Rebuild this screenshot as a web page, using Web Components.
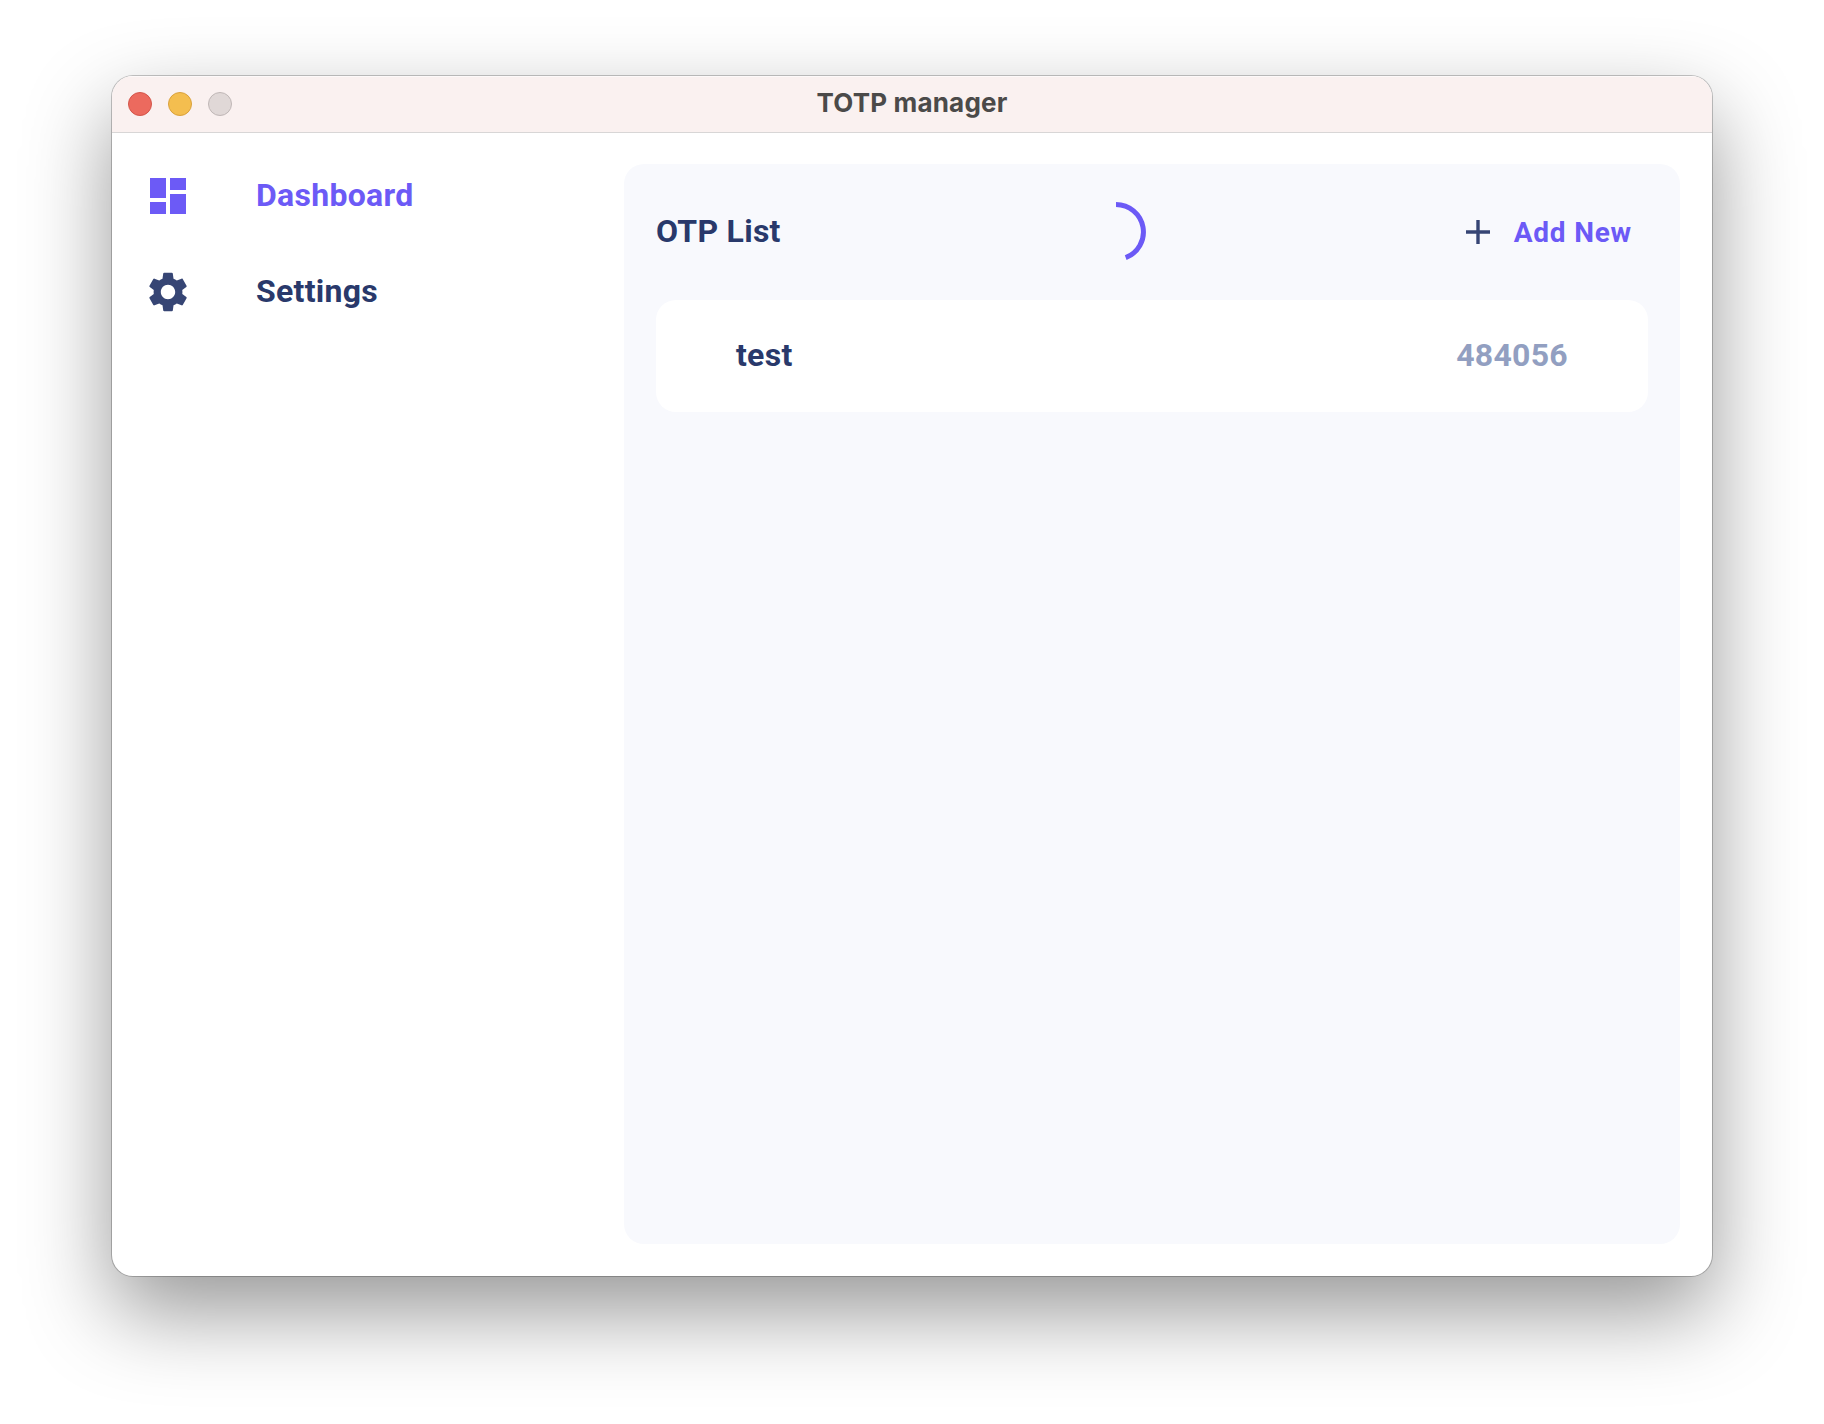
<!DOCTYPE html>
<html lang="en">
<head>
<meta charset="utf-8">
<title>TOTP manager</title>
<style>
html,body{margin:0;height:100%}
body{background:#fff;overflow:hidden;font-family:Roboto,sans-serif}
</style>
</head>
<body>
<app-window heading="TOTP manager">
  <nav-item slot="nav" icon="dashboard" active>Dashboard</nav-item>
  <nav-item slot="nav" icon="settings">Settings</nav-item>
  <otp-panel>
    <span slot="title">OTP List</span>
    <progress-ring slot="progress"></progress-ring>
    <add-button slot="action">Add New</add-button>
    <otp-card code="484056">test</otp-card>
  </otp-panel>
</app-window>
<script>
const define = (name, html, setup) => {
  const tpl = document.createElement('template');
  tpl.innerHTML = html;
  customElements.define(name, class extends HTMLElement {
    constructor() {
      super();
      this.attachShadow({mode: 'open'}).append(tpl.content.cloneNode(true));
    }
    connectedCallback() { if (setup) setup(this, this.shadowRoot); }
  });
};

define('app-window', `
<style>
:host{display:block;box-sizing:border-box;padding:76px 112px 148px;height:1424px;width:1824px}
.window{display:flex;flex-direction:column;height:1200px;border-radius:21px;overflow:hidden;background:#fff;
  box-shadow:0 0 0 1px rgba(0,0,0,.22),0 36px 86px rgba(0,0,0,.41)}
header{display:grid;grid-template-columns:1fr auto 1fr;align-items:center;box-sizing:border-box;height:57px;padding:0 16px;
  background:#faf1f0;border-bottom:1px solid #d8d6d6;box-shadow:inset 0 1px #fdf9f9}
.lights{display:flex;gap:16px}
.lights i{box-sizing:border-box;width:24px;height:24px;border-radius:50%;border:1px solid #d3554a;background:#ec6a5e}
.lights i:nth-child(2){background:#f4be4f;border-color:#d9a13c}
.lights i:nth-child(3){background:#e0d8d7;border-color:#bfb7b6}
h1{margin:0;font:700 26px/32px Inter,sans-serif;letter-spacing:.18px;color:#4b4a49;padding-bottom:2px}
main{flex:1;display:flex}
nav{width:512px;padding-top:15px;flex:none}
section{flex:1;display:flex;padding:31px 32px 32px 0}
::slotted(otp-panel){flex:1}
</style>
<div class="window">
  <header><div class="lights"><i></i><i></i><i></i></div><h1></h1></header>
  <main><nav><slot name="nav"></slot></nav><section><slot></slot></section></main>
</div>`, (el, root) => { root.querySelector('h1').textContent = el.getAttribute('heading'); });

const icons = {
  dashboard: 'M3 13h8V3H3v10zm0 8h8v-6H3v6zm10 0h8V11h-8v10zm0-18v6h8V3h-8z',
  settings: 'M19.14 12.94c.04-.3.06-.61.06-.94 0-.32-.02-.64-.07-.94l2.03-1.58c.18-.14.23-.41.12-.61l-1.92-3.32c-.12-.22-.37-.29-.59-.22l-2.39.96c-.5-.38-1.03-.7-1.62-.94l-.36-2.54c-.04-.24-.24-.41-.48-.41h-3.84c-.24 0-.43.17-.47.41l-.36 2.54c-.59.24-1.13.57-1.62.94l-2.39-.96c-.22-.08-.47 0-.59.22L2.74 8.87c-.12.21-.08.47.12.61l2.03 1.58c-.05.3-.07.62-.07.94s.02.64.07.94l-2.03 1.58c-.18.14-.23.41-.12.61l1.92 3.32c.12.22.37.29.59.22l2.39-.96c.5.38 1.03.7 1.62.94l.36 2.54c.05.24.24.41.48.41h3.84c.24 0 .44-.17.47-.41l.36-2.54c.59-.24 1.13-.56 1.62-.94l2.39.96c.22.08.47 0 .59-.22l1.92-3.32c.12-.22.07-.47-.12-.61l-2.01-1.58zM12 15.6c-1.98 0-3.6-1.62-3.6-3.6s1.62-3.6 3.6-3.6 3.6 1.62 3.6 3.6-1.62 3.6-3.6 3.6z'
};
define('nav-item', `
<style>
:host{display:flex;align-items:center;height:96px;padding-left:32px;gap:64px;color:#29396b;font-size:32px;line-height:38px;font-weight:700;letter-spacing:.28px}
:host([active]){color:#6c5af6}
svg{width:48px;height:48px;fill:#364574}
:host([active]) svg{fill:#6c5af6}
.label{padding-bottom:2px}
</style>
<svg viewBox="0 0 24 24"><path/></svg><span class="label"><slot></slot></span>`,
(el, root) => { root.querySelector('path').setAttribute('d', icons[el.getAttribute('icon')]); });

define('otp-panel', `
<style>
:host{display:flex;flex-direction:column;box-sizing:border-box;padding:20px 32px;border-radius:20px;background:#f8f9fd}
header{display:flex;align-items:center;justify-content:space-between;height:96px;margin-bottom:20px;
  font-size:32px;font-weight:700;color:#29396b}
::slotted([slot=title]){padding-bottom:2px;letter-spacing:.28px}
</style>
<header><slot name="title"></slot><slot name="progress"></slot><slot name="action"></slot></header>
<slot></slot>`);

define('progress-ring', `
<style>:host{display:block;width:60px;height:60px;margin-right:8px}svg{display:block;overflow:visible}</style>
<svg width="60" height="60" viewBox="0 0 60 60"><path d="M30 2.5A27.5 27.5 0 0 1 39.7 55.7" fill="none" stroke="#6c5af6" stroke-width="5"/></svg>`);

define('add-button', `
<style>
:host{display:flex;align-items:center;gap:18px;padding-right:16px;color:#6c5af6;font-size:28px;font-weight:700;letter-spacing:.8px}
svg{width:36px;height:36px;fill:#364574}
</style>
<svg viewBox="0 0 36 36"><path d="M30 19.7H19.7V30h-3.4V19.7H6v-3.4h10.3V6h3.4v10.3H30z"/></svg><span><slot></slot></span>`);

define('otp-card', `
<style>
:host{display:flex;align-items:center;justify-content:space-between;box-sizing:border-box;height:112px;padding:0 80px 2px;border-radius:20px;background:#fff;
  font-size:32px;font-weight:700;color:#29396b;letter-spacing:.28px}
b{font-weight:700;color:#929fc1}
</style>
<span><slot></slot></span><b></b>`,
(el, root) => { root.querySelector('b').textContent = el.getAttribute('code'); });
</script>
</body>
</html>
